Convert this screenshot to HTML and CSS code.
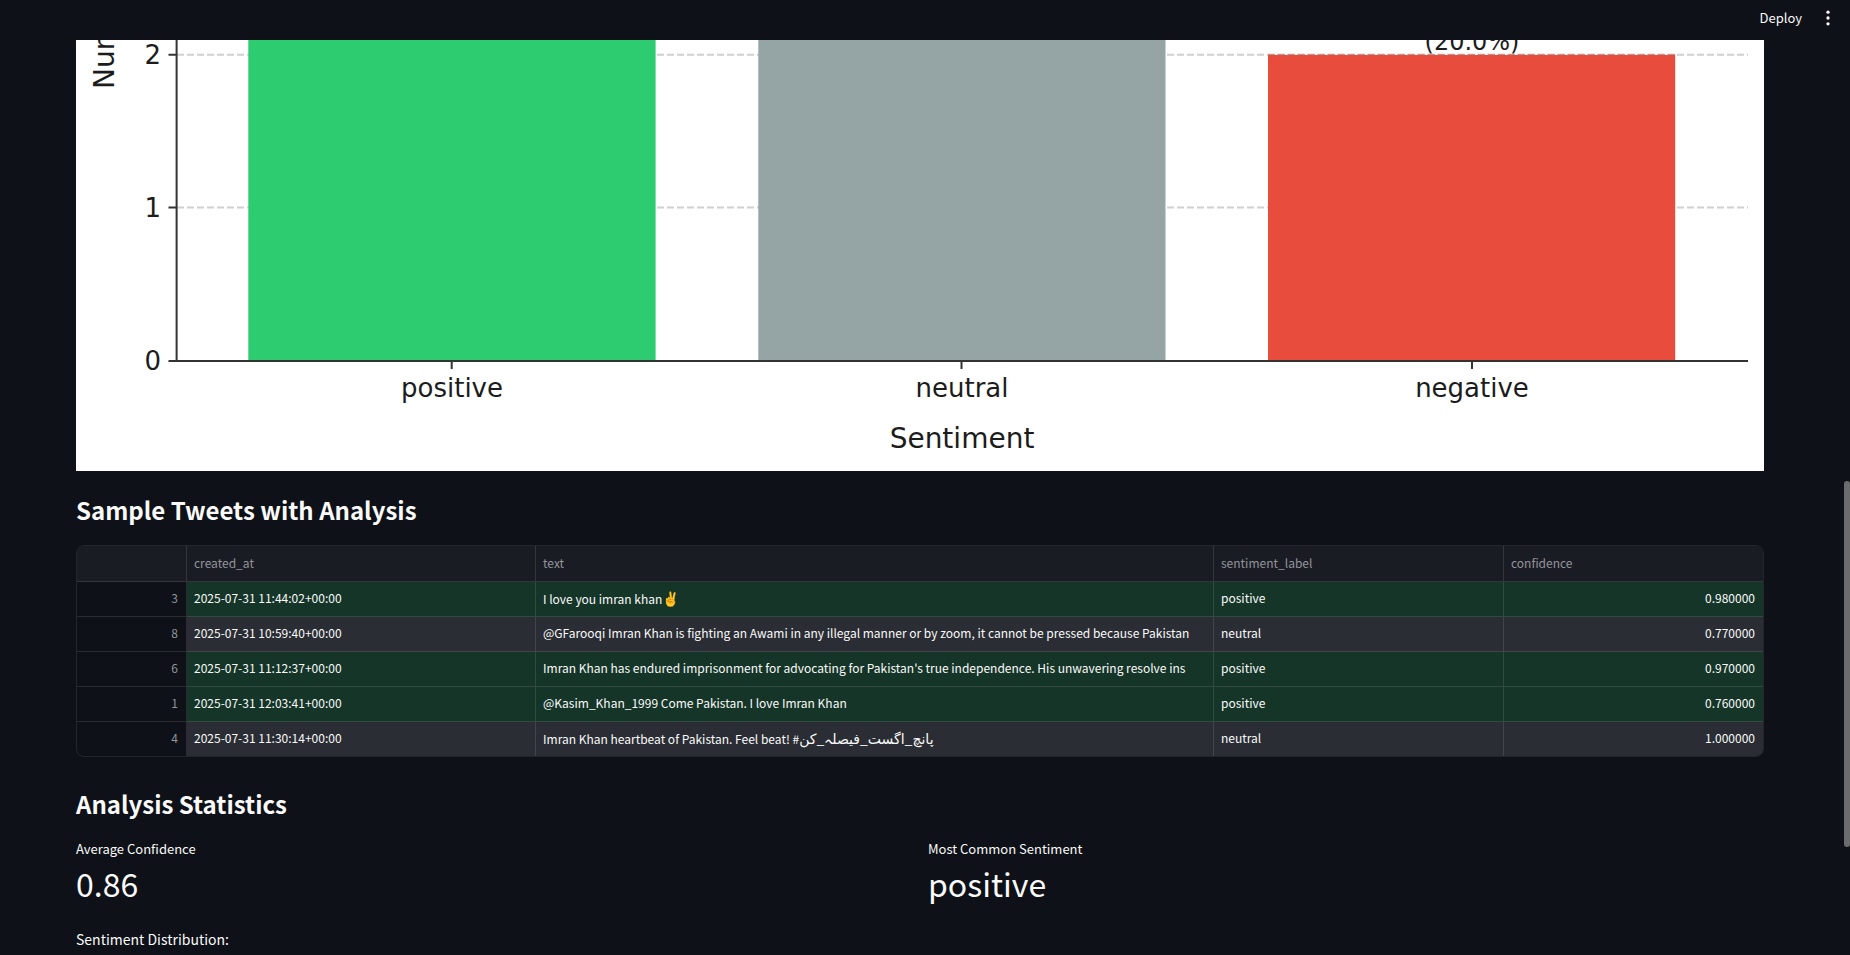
FILE: index.html
```html
<!DOCTYPE html>
<html lang="en">
<head>
<meta charset="utf-8">
<meta name="viewport" content="width=device-width, initial-scale=1">
<title>Sentiment Analysis</title>
<link rel="stylesheet" href="styles.css">
</head>
<body>
<header class="toolbar">
  <button type="button" class="deploy">Deploy</button>
  <button type="button" class="menu" aria-label="Main menu">
    <svg viewBox="0 0 24 24" width="20" height="20" fill="currentColor" aria-hidden="true"><circle cx="12" cy="5" r="2"/><circle cx="12" cy="12" r="2"/><circle cx="12" cy="19" r="2"/></svg>
  </button>
</header>
<main class="content">
  <svg class="chart" viewBox="0 0 1688 431" role="img" aria-label="Number of tweets by sentiment">
    <rect width="1688" height="431" fill="#fff"/>
    <g class="grid">
      <path d="M101 14.8H1672M101 167.5H1672"/>
    </g>
    <rect x="172.3" y="-200" width="407.3" height="521" fill="#2ecc71"/>
    <rect x="682.3" y="-200" width="407.2" height="521" fill="#95a5a6"/>
    <rect x="1192" y="15" width="407.2" height="306" fill="#e74c3c"/>
    <path class="grid-top" d="M1192 14.4H1599"/>
    <path class="axis" d="M100.6 0V321M92.5 321H1672M92.5 14.8H101M92.5 167.5H101M375.700 321V329M885.500 321V329M1396 321V329"/>
    <g class="tick-label">
      <text x="85" y="24" text-anchor="end">2</text>
      <text x="85" y="177" text-anchor="end">1</text>
      <text x="85" y="330" text-anchor="end">0</text>
      <text x="376" y="357" text-anchor="middle">positive</text>
      <text x="886" y="357" text-anchor="middle">neutral</text>
      <text x="1396" y="357" text-anchor="middle">negative</text>
    </g>
    <text class="bar-label" x="1396" y="10" text-anchor="middle">(20.0%)</text>
    <text class="axis-label" x="886" y="408" text-anchor="middle">Sentiment</text>
    <text class="axis-label" transform="translate(38 49) rotate(-90)">Number of Tweets</text>
  </svg>

  <h2 class="heading">Sample Tweets with Analysis</h2>
  <div class="frame">
    <table class="tweets">
      <colgroup><col class="c-index"><col class="c-date"><col class="c-text"><col class="c-label"><col class="c-conf"></colgroup>
      <thead>
        <tr><th aria-label="index"></th><th scope="col">created_at</th><th scope="col">text</th><th scope="col">sentiment_label</th><th scope="col">confidence</th></tr>
      </thead>
      <tbody>
        <tr class="positive"><th scope="row">3</th><td>2025-07-31 11:44:02+00:00</td><td>I love you imran khan<span class="large">✌️</span></td><td>positive</td><td class="num">0.980000</td></tr>
        <tr class="neutral"><th scope="row">8</th><td>2025-07-31 10:59:40+00:00</td><td>@GFarooqi Imran Khan is fighting an Awami in any illegal manner or by zoom, it cannot be pressed because Pakistan</td><td>neutral</td><td class="num">0.770000</td></tr>
        <tr class="positive"><th scope="row">6</th><td>2025-07-31 11:12:37+00:00</td><td>Imran Khan has endured imprisonment for advocating for Pakistan's true independence. His unwavering resolve ins</td><td>positive</td><td class="num">0.970000</td></tr>
        <tr class="positive"><th scope="row">1</th><td>2025-07-31 12:03:41+00:00</td><td>@Kasim_Khan_1999 Come Pakistan. I love Imran Khan</td><td>positive</td><td class="num">0.760000</td></tr>
        <tr class="neutral"><th scope="row">4</th><td>2025-07-31 11:30:14+00:00</td><td>Imran Khan heartbeat of Pakistan. Feel beat! #<span class="large" lang="ur">پانچ_اگست_فیصلہ_کن</span></td><td>neutral</td><td class="num">1.000000</td></tr>
      </tbody>
    </table>
  </div>

  <h2 class="heading">Analysis Statistics</h2>
  <dl class="metrics">
    <div><dt>Average Confidence</dt><dd>0.86</dd></div>
    <div><dt>Most Common Sentiment</dt><dd>positive</dd></div>
  </dl>
  <p class="note">Sentiment Distribution:</p>
</main>
<div class="scroll-thumb"></div>
</body>
</html>
```
FILE: styles.css
```css
* { box-sizing: border-box; }

body {
  margin: 0;
  background: #0e1117;
  color: #fafafa;
  font-family: "Source Sans Pro", "Noto Sans CJK SC", "DejaVu Sans", sans-serif;
  font-size: 14px;
  line-height: 24px;
}

.toolbar {
  display: flex;
  justify-content: flex-end;
  align-items: center;
  gap: 16px;
  height: 40px;
  padding: 0 12px 4px 0;
}

.toolbar button {
  display: flex;
  padding: 0;
  border: 0;
  background: none;
  color: inherit;
  font-family: inherit;
  font-size: 13px;
  line-height: 20px;
  cursor: pointer;
}

.content { padding: 0 86px 0 76px; }

.chart {
  display: block;
  width: 100%;
  overflow: hidden;
  font-family: "DejaVu Sans", sans-serif;
}

.chart text { fill: #1c1c1c; }
.chart .tick-label { font-size: 26px; }
.chart .bar-label { font-size: 24px; }
.chart .axis-label { font-size: 28px; }
.grid { fill: none; stroke: #d0d0d0; stroke-width: 2; stroke-dasharray: 7 3; }
.grid-top { fill: none; stroke: #c08a85; stroke-width: 1; stroke-dasharray: 7 3; }
.axis { fill: none; stroke: #333; stroke-width: 2; }

.heading {
  margin: 0;
  padding: 22px 0 18px;
  font-size: 24px;
  font-weight: 600;
  line-height: 34px;
}

.frame {
  margin-bottom: 8px;
  border: 1px solid #24262c;
  border-radius: 8px;
  overflow: hidden;
}

.tweets {
  width: 100%;
  table-layout: fixed;
  border-collapse: separate;
  border-spacing: 0;
  font-size: 12px;
  line-height: 20px;
}

.c-index { width: 110px; }
.c-date { width: 349px; }
.c-label { width: 290px; }
.c-conf { width: 259px; }

.tweets th,
.tweets td {
  height: 35px;
  padding: 0 8px 2px 7px;
  border: 0 solid rgba(250, 250, 250, 0.12);
  border-width: 0 1px 1px 0;
  overflow: hidden;
  text-align: left;
  white-space: nowrap;
  font-weight: 400;
}

.tweets th { color: #92949a; }
.tweets thead th { height: 36px; background: #1a1c24; }
.tweets tbody th { text-align: right; }
.tweets .num { text-align: right; }
.tweets tr > :last-child { border-right-width: 0; }
.tweets tbody tr:last-child > * { height: 34px; border-bottom-width: 0; }
.tweets .large { font-size: 14px; }
.positive td { background: #153528; }
.neutral td { background: #2a2d34; }

.metrics {
  display: grid;
  grid-template-columns: 1fr 1fr;
  gap: 16px;
  margin: 0 0 20px;
}

.metrics dt { font-size: 13px; line-height: 20px; }
.metrics dd { margin: 0; font-size: 32px; line-height: 48px; }

.note { margin: 0; }

.scroll-thumb {
  position: fixed;
  top: 481px;
  right: 0;
  width: 6px;
  height: 366px;
  border-radius: 3px;
  background: #6b6c70;
}
```
